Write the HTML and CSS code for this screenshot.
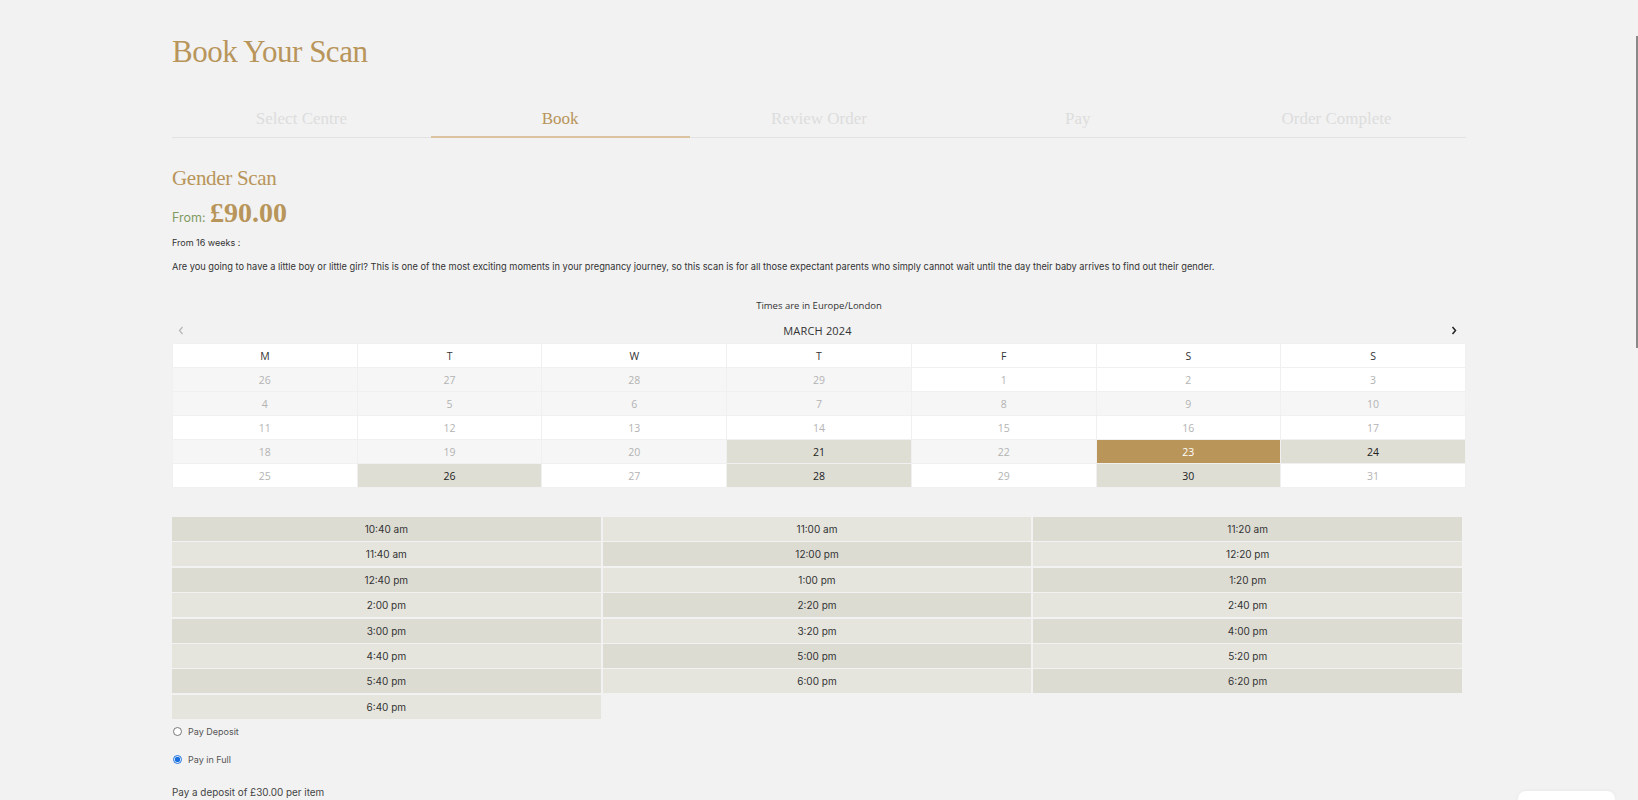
FILE: index.html
```html
<!DOCTYPE html>
<html lang="en">
<head>
<meta charset="utf-8">
<title>Book Your Scan</title>
<link rel="stylesheet" href="styles.css">
</head>
<body>
<main class="page">
  <h1 class="title">Book Your Scan</h1>

  <nav class="steps">
    <div class="step">Select Centre</div>
    <div class="step active">Book</div>
    <div class="step">Review Order</div>
    <div class="step">Pay</div>
    <div class="step">Order Complete</div>
  </nav>

  <section class="product">
    <h2 class="product-name">Gender Scan</h2>
    <p class="price"><span class="from">From:</span> <span class="amount">£90.00</span></p>
    <p class="weeks">From 16 weeks :</p>
    <p class="desc">Are you going to have a little boy or little girl? This is one of the most exciting moments in your pregnancy journey, so this scan is for all those expectant parents who simply cannot wait until the day their baby arrives to find out their gender.</p>
  </section>

  <section class="calendar">
    <p class="tz">Times are in Europe/London</p>
    <div class="cal-nav">
      <span class="nav-btn prev"><svg width="6" height="9" viewBox="0 0 6 9"><path d="M4.5 1 L1.5 4.5 L4.5 8" fill="none" stroke="#b5b5b5" stroke-width="1.2"/></svg></span>
      <span class="month">MARCH 2024</span>
      <span class="nav-btn next"><svg width="6" height="9" viewBox="0 0 6 9"><path d="M1.5 1 L4.5 4.5 L1.5 8" fill="none" stroke="#222" stroke-width="1.5"/></svg></span>
    </div>
    <table class="cal">
      <thead>
        <tr><th>M</th><th>T</th><th>W</th><th>T</th><th>F</th><th>S</th><th>S</th></tr>
      </thead>
      <tbody>
        <tr><td class="shade">26</td><td class="shade">27</td><td class="shade">28</td><td class="shade">29</td><td>1</td><td>2</td><td>3</td></tr>
        <tr class="shade"><td>4</td><td>5</td><td>6</td><td>7</td><td>8</td><td>9</td><td>10</td></tr>
        <tr><td>11</td><td>12</td><td>13</td><td>14</td><td>15</td><td>16</td><td>17</td></tr>
        <tr class="shade"><td>18</td><td>19</td><td>20</td><td class="avail">21</td><td>22</td><td class="selected">23</td><td class="avail">24</td></tr>
        <tr><td>25</td><td class="avail">26</td><td>27</td><td class="avail">28</td><td>29</td><td class="avail">30</td><td>31</td></tr>
      </tbody>
    </table>
  </section>

  <div class="slots">
    <div class="slot">10:40 am</div>
    <div class="slot">11:00 am</div>
    <div class="slot">11:20 am</div>
    <div class="slot">11:40 am</div>
    <div class="slot">12:00 pm</div>
    <div class="slot">12:20 pm</div>
    <div class="slot">12:40 pm</div>
    <div class="slot">1:00 pm</div>
    <div class="slot">1:20 pm</div>
    <div class="slot">2:00 pm</div>
    <div class="slot">2:20 pm</div>
    <div class="slot">2:40 pm</div>
    <div class="slot">3:00 pm</div>
    <div class="slot">3:20 pm</div>
    <div class="slot">4:00 pm</div>
    <div class="slot">4:40 pm</div>
    <div class="slot">5:00 pm</div>
    <div class="slot">5:20 pm</div>
    <div class="slot">5:40 pm</div>
    <div class="slot">6:00 pm</div>
    <div class="slot">6:20 pm</div>
    <div class="slot">6:40 pm</div>
  </div>

  <div class="payment">
    <label class="option"><input type="radio" name="pay"> <span>Pay Deposit</span></label>
    <label class="option"><input type="radio" name="pay" checked> <span>Pay in Full</span></label>
  </div>
  <p class="deposit-note">Pay a deposit of £30.00 per item</p>
</main>

<div class="scroll-thumb"></div>
<div class="widget"></div>
</body>
</html>
```

FILE: styles.css
```css
* { box-sizing: border-box; }

html, body {
  margin: 0;
  padding: 0;
  background: #f2f2f2;
}

body {
  font-family: "Inter", "Liberation Sans", sans-serif;
  color: #333;
  overflow: hidden;
}

.page {
  width: 1294px;
  margin: 0 auto;
}

.title {
  margin: 32px 0 0;
  font-family: "Liberation Serif", serif;
  font-weight: normal;
  font-size: 31px;
  line-height: 40px;
  letter-spacing: -0.5px;
  color: #b8955a;
}

.steps {
  margin-top: 28px;
  display: grid;
  grid-template-columns: repeat(5, 1fr);
}

.step {
  padding: 7px 0 6px;
  text-align: center;
  font-family: "Liberation Serif", serif;
  font-size: 17px;
  line-height: 24px;
  color: #dddddd;
  border-bottom: 1px solid #e2e2e2;
}

.step.active {
  color: #b8955a;
  padding-bottom: 5px;
  border-bottom: 2px solid #dcc3a0;
}

.product-name {
  margin: 26px 0 0;
  font-family: "Liberation Serif", serif;
  font-weight: normal;
  font-size: 21px;
  line-height: 28px;
  letter-spacing: -0.3px;
  color: #b8955a;
}

.price {
  margin: 5px 0 0;
  line-height: 32px;
}

.from {
  font-size: 12.5px;
  color: #809a62;
}

.amount {
  font-family: "Liberation Serif", serif;
  font-weight: bold;
  font-size: 28px;
  color: #b8955a;
}

.weeks {
  margin: 1px 0 0;
  font-size: 9px;
  line-height: 16px;
  color: #333;
}

.desc {
  margin: 8px 0 0;
  font-size: 9.25px;
  line-height: 16px;
  color: #333;
}

.tz {
  margin: 23px 0 0;
  text-align: center;
  font-family: "Open Sans", sans-serif;
  font-size: 9.5px;
  line-height: 16px;
  color: #333;
}

.cal-nav {
  margin-top: 4px;
  height: 25px;
  display: flex;
  align-items: center;
  justify-content: space-between;
  padding: 0 9px 0 6px;
}

.nav-btn {
  display: flex;
  align-items: center;
}

.month {
  font-family: "Open Sans", sans-serif;
  font-size: 11px;
  color: #333;
  letter-spacing: 0.2px;
}

.cal {
  width: 100%;
  table-layout: fixed;
  border-collapse: collapse;
  font-family: "Open Sans", sans-serif;
}

.cal th,
.cal td {
  height: 24px;
  padding: 0;
  text-align: center;
  border: 1px solid #f0f0f0;
  background: #fff;
}

.cal th {
  font-weight: normal;
  font-size: 10.5px;
  color: #333;
}

.cal td {
  font-size: 10.5px;
  color: #b3b3b3;
}

.cal tr.shade td,
.cal td.shade {
  background: #f6f6f6;
}

.cal tr td.avail {
  background: #deded5;
  color: #222;
  font-weight: 500;
}

.cal tr td.selected {
  background: #b9955a;
  color: #fff;
  font-weight: 500;
}

.slots {
  margin: 29px 4px 0 0;
  display: grid;
  grid-template-columns: repeat(3, 1fr);
  grid-auto-rows: 24px;
  gap: 1.4px 2px;
}

.slot {
  display: flex;
  align-items: center;
  justify-content: center;
  font-size: 10px;
  color: #333;
  background: #e5e5de;
}

.slot:nth-child(odd) {
  background: #dddcd3;
}

.payment {
  margin-top: 5px;
  display: flex;
  flex-direction: column;
  gap: 12px;
}

.option {
  display: flex;
  align-items: center;
  gap: 6px;
  height: 16px;
  padding-left: 1px;
  font-size: 9px;
  color: #555;
}

.option input {
  margin: 0;
  width: 9px;
  height: 9px;
  accent-color: #1a6fe0;
}

.deposit-note {
  margin: 15px 0 0;
  font-size: 9.9px;
  line-height: 18px;
  color: #444;
}

.scroll-thumb {
  position: fixed;
  right: 0;
  top: 36px;
  width: 2px;
  height: 312px;
  background: #8a8a8a;
}

.widget {
  position: fixed;
  left: 1518px;
  bottom: 0;
  width: 97px;
  height: 9px;
  background: #fff;
  border-radius: 8px 8px 0 0;
  box-shadow: 0 0 4px rgba(0,0,0,0.06);
}
```
